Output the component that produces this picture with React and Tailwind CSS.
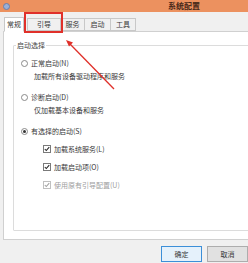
import React from 'react';

const font = { fontFamily: '"Noto Sans CJK SC", "Liberation Sans", sans-serif' };

const Radio = ({ checked }) => (
  <span className="w-[7px] h-[7px] rounded-full border border-[#8a8a8a] bg-white flex items-center justify-center shrink-0">
    {checked && <span className="w-[3px] h-[3px] rounded-full bg-[#333]" />}
  </span>
);

const Check = ({ disabled }) => (
  <span
    className={`w-[8px] h-[8px] border flex items-center justify-center shrink-0 bg-white ${
      disabled ? 'border-[#c0c0c0]' : 'border-[#7a7a7a]'
    }`}
  >
    <svg viewBox="0 0 8 8" className="w-[6px] h-[6px]">
      <path d="M1 4 L3 6 L7 1.5" fill="none" stroke={disabled ? '#a0a0a0' : '#222'} strokeWidth="1.4" />
    </svg>
  </span>
);

const Tab = ({ label, active, className = '' }) => (
  <div
    className={`h-[13px] flex items-center justify-center text-[7px] border border-[#c8c8c8] ${
      active ? 'bg-white border-b-white h-[15px] -mb-px' : 'bg-[#f0f0f0]'
    } ${className}`}
  >
    {label}
  </div>
);

export default function App() {
  return (
    <div className="relative w-[248px] h-[263px] overflow-hidden bg-[#f0f0f0] text-[#383838]" style={font}>
      {/* title bar */}
      <div className="h-[12px] bg-[#ec915f] flex items-center px-[3px]">
        <span className="w-[7px] h-[7px] rounded-sm bg-[#9ab0d8] border border-[#6c7fa8]" />
        <span className="ml-[158px] text-[8px] leading-none font-bold text-[#4a2a1a]">系统配置</span>
      </div>

      {/* tabs */}
      <div className="mt-[5px] pl-[4px] flex items-end relative z-10">
        <Tab label="常规" active className="w-[20px]" />
        <Tab label="引导" className="w-[34px] ml-[3px]" />
        <Tab label="服务" className="w-[25px] -ml-px" />
        <Tab label="启动" className="w-[27px] -ml-px" />
        <Tab label="工具" className="w-[26px] -ml-px" />
      </div>

      {/* tab panel */}
      <div className="ml-[3px] w-[260px] h-[209px] bg-white border border-[#d0d0d0] pt-[13px] pl-[9px]">
        <div className="relative h-[186px] border border-[#dcdcdc] rounded-[1px] pt-[12px] pl-[7px] text-[7px] leading-none">
          <span className="absolute -top-[4px] left-[2px] bg-white px-[1px] text-[7px] leading-none text-[#444]">启动选择</span>

          <div className="flex items-center gap-[3px] mt-[2px]">
            <Radio />
            <span>正常启动(N)</span>
          </div>
          <div className="pl-[13px] mt-[6px]">加载所有设备驱动程序和服务</div>

          <div className="flex items-center gap-[3px] mt-[14px]">
            <Radio />
            <span>诊断启动(D)</span>
          </div>
          <div className="pl-[13px] mt-[6px]">仅加载基本设备和服务</div>

          <div className="flex items-center gap-[3px] mt-[14px]">
            <Radio checked />
            <span>有选择的启动(S)</span>
          </div>

          <div className="pl-[22px] mt-[10px] flex flex-col gap-[10px]">
            <div className="flex items-center gap-[3px]">
              <Check />
              <span>加载系统服务(L)</span>
            </div>
            <div className="flex items-center gap-[3px]">
              <Check />
              <span>加载启动项(O)</span>
            </div>
            <div className="flex items-center gap-[3px] text-[#a0a0a0]">
              <Check disabled />
              <span>使用原有引导配置(U)</span>
            </div>
          </div>
        </div>
      </div>

      {/* buttons */}
      <div className="mt-[6px] flex gap-[5px] pl-[161px]">
        <div className="w-[48px] h-[16px] border border-[#3c8fd8] bg-[#e5f1fb] flex items-center justify-center text-[7px]">确定</div>
        <div className="w-[48px] h-[16px] border border-[#adadad] bg-[#e1e1e1] flex items-center justify-center text-[7px]">取消</div>
      </div>

      {/* red highlight box */}
      <div className="absolute left-[24px] top-[12px] w-[39px] h-[21px] border-2 border-[#e0302a] z-20" />

      {/* red arrow */}
      <svg className="absolute left-0 top-0 z-20" width="248" height="263">
        <line x1="114" y1="89" x2="70" y2="44" stroke="#e0302a" strokeWidth="1.3" />
        <path d="M66 40 L73 42.5 L69 46.5 Z" fill="#e0302a" />
      </svg>
    </div>
  );
}
